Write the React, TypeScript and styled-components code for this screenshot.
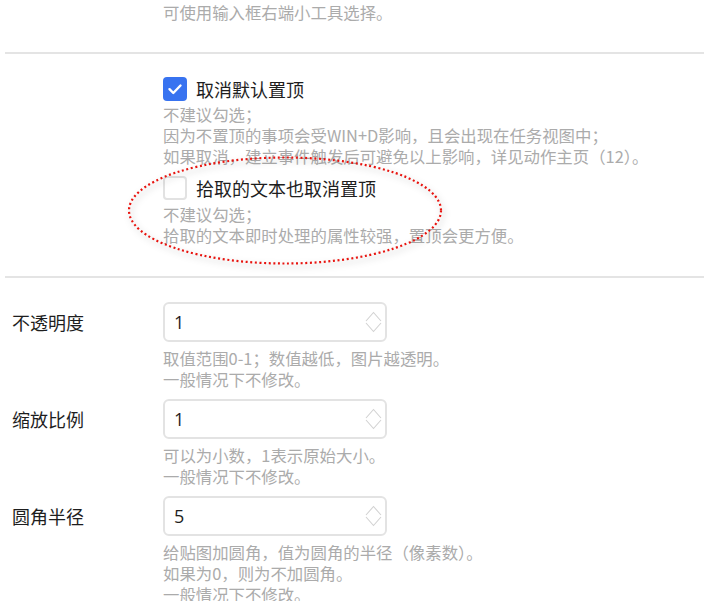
import React from "react";
import styled, { createGlobalStyle } from "styled-components";

const GlobalStyle = createGlobalStyle`
  html, body {
    margin: 0;
    padding: 0;
    background: #ffffff;
    overflow: hidden;
  }

  body {
    font-family: "Noto Sans CJK SC", "Noto Sans", sans-serif;
    color: #222222;
  }
`;

const Page = styled.div`
  position: relative;
  width: 704px;
  height: 601px;
  padding-left: 5px;
  box-sizing: border-box;
  overflow: hidden;
`;

const Section = styled.section<{ $top: number; $bottom: number }>`
  display: grid;
  grid-template-columns: 158px 1fr;
  padding: ${(p) => p.$top}px 0 ${(p) => p.$bottom}px;
  border-bottom: ${(p) => (p.$bottom ? "2px solid #e4e4e4" : "none")};
`;

const Content = styled.div<{ $wide?: boolean }>`
  grid-column: ${(p) => (p.$wide ? "1 / span 2" : "2")};
  display: flex;
  flex-direction: column;
`;

const Help = styled.div<{ $gap?: number }>`
  margin-top: ${(p) => p.$gap ?? 0}px;
  font-size: 16.4px;
  line-height: 21px;
  color: #ababab;
  white-space: nowrap;
`;

const CheckRow = styled.label<{ $gap?: number }>`
  display: flex;
  align-items: center;
  gap: 9px;
  height: 24px;
  margin-top: ${(p) => p.$gap ?? 0}px;
  font-size: 18px;
  color: #1e1e1e;
  cursor: pointer;
`;

const Box = styled.span<{ $checked: boolean }>`
  display: flex;
  align-items: center;
  justify-content: center;
  width: 24px;
  height: 24px;
  box-sizing: border-box;
  border-radius: 4px;
  background: ${(p) => (p.$checked ? "#3873f0" : "#ffffff")};
  border: ${(p) => (p.$checked ? "none" : "2px solid #e2e2e2")};
`;

const Fields = styled.div`
  display: flex;
  flex-direction: column;
  gap: 9px;
`;

const FieldRow = styled.div`
  display: grid;
  grid-template-columns: 158px 224px;
`;

const FieldLabel = styled.div`
  padding-left: 7px;
  height: 40px;
  line-height: 40px;
  font-size: 18px;
  color: #1e1e1e;
`;

const InputBox = styled.div`
  display: flex;
  align-items: center;
  justify-content: space-between;
  height: 40px;
  box-sizing: border-box;
  padding: 0 3px 0 9px;
  border: 2px solid #e3e3e3;
  border-radius: 6px;
  font-family: "Open Sans", "Noto Sans", sans-serif;
  font-size: 18px;
  color: #1e1e1e;
`;

const Spinner = styled.svg`
  width: 17px;
  height: 26px;
  stroke: #d2d2d2;
  stroke-width: 1.1;
  fill: none;
`;

const Annotation = styled.svg`
  position: absolute;
  left: 0;
  top: 0;
  width: 704px;
  height: 601px;
  pointer-events: none;
  filter: drop-shadow(2px 3px 3px rgba(0, 0, 0, 0.3));
`;

const Check: React.FC = () => (
  <svg width="16" height="16" viewBox="0 0 16 16">
    <path
      d="M2.5 8.2 L6.3 12 L13.5 4.5"
      fill="none"
      stroke="#ffffff"
      strokeWidth="2.4"
      strokeLinecap="round"
      strokeLinejoin="round"
    />
  </svg>
);

interface CheckProps {
  checked: boolean;
  label: string;
  gap?: number;
}

const Checkbox: React.FC<CheckProps> = ({ checked, label, gap }) => (
  <CheckRow $gap={gap}>
    <Box $checked={checked}>{checked && <Check />}</Box>
    {label}
  </CheckRow>
);

interface Field {
  label: string;
  value: string;
  help: string[];
}

const fields: Field[] = [
  {
    label: "不透明度",
    value: "1",
    help: ["取值范围0-1；数值越低，图片越透明。", "一般情况下不修改。"],
  },
  {
    label: "缩放比例",
    value: "1",
    help: ["可以为小数，1表示原始大小。", "一般情况下不修改。"],
  },
  {
    label: "圆角半径",
    value: "5",
    help: [
      "给贴图加圆角，值为圆角的半径（像素数）。",
      "如果为0，则为不加圆角。",
      "一般情况下不修改。",
    ],
  },
];

const NumberField: React.FC<{ field: Field }> = ({ field }) => (
  <FieldRow>
    <FieldLabel>{field.label}</FieldLabel>
    <div>
      <InputBox>
        {field.value}
        <Spinner viewBox="0 0 17 26">
          <path d="M1 12 L8.5 3.5 L16 12" />
          <path d="M1 14 L8.5 22.5 L16 14" />
        </Spinner>
      </InputBox>
      <Help $gap={6}>
        {field.help.map((line) => (
          <div key={line}>{line}</div>
        ))}
      </Help>
    </div>
  </FieldRow>
);

export default function App() {
  return (
    <>
      <GlobalStyle />
      <Page>
        <Section $top={2} $bottom={29}>
          <Content>
            <Help>可使用输入框右端小工具选择。</Help>
          </Content>
        </Section>

        <Section $top={23} $bottom={30}>
          <Content>
            <Checkbox checked label="取消默认置顶" />
            <Help $gap={3}>
              <div>不建议勾选；</div>
              <div>因为不置顶的事项会受WIN+D影响，且会出现在任务视图中；</div>
              <div>如果取消，建立事件触发后可避免以上影响，详见动作主页（12）。</div>
            </Help>
            <Checkbox checked={false} label="拾取的文本也取消置顶" gap={9} />
            <Help $gap={4}>
              <div>不建议勾选；</div>
              <div>拾取的文本即时处理的属性较强，置顶会更方便。</div>
            </Help>
          </Content>
        </Section>

        <Section $top={24} $bottom={0}>
          <Content $wide>
            <Fields>
              {fields.map((f) => (
                <NumberField key={f.label} field={f} />
              ))}
            </Fields>
          </Content>
        </Section>

        <Annotation viewBox="0 0 704 601">
          <ellipse
            cx="285"
            cy="210.5"
            rx="156"
            ry="53"
            fill="none"
            stroke="#e8140f"
            strokeWidth="2.2"
            strokeDasharray="2 2.6"
          />
        </Annotation>
      </Page>
    </>
  );
}
